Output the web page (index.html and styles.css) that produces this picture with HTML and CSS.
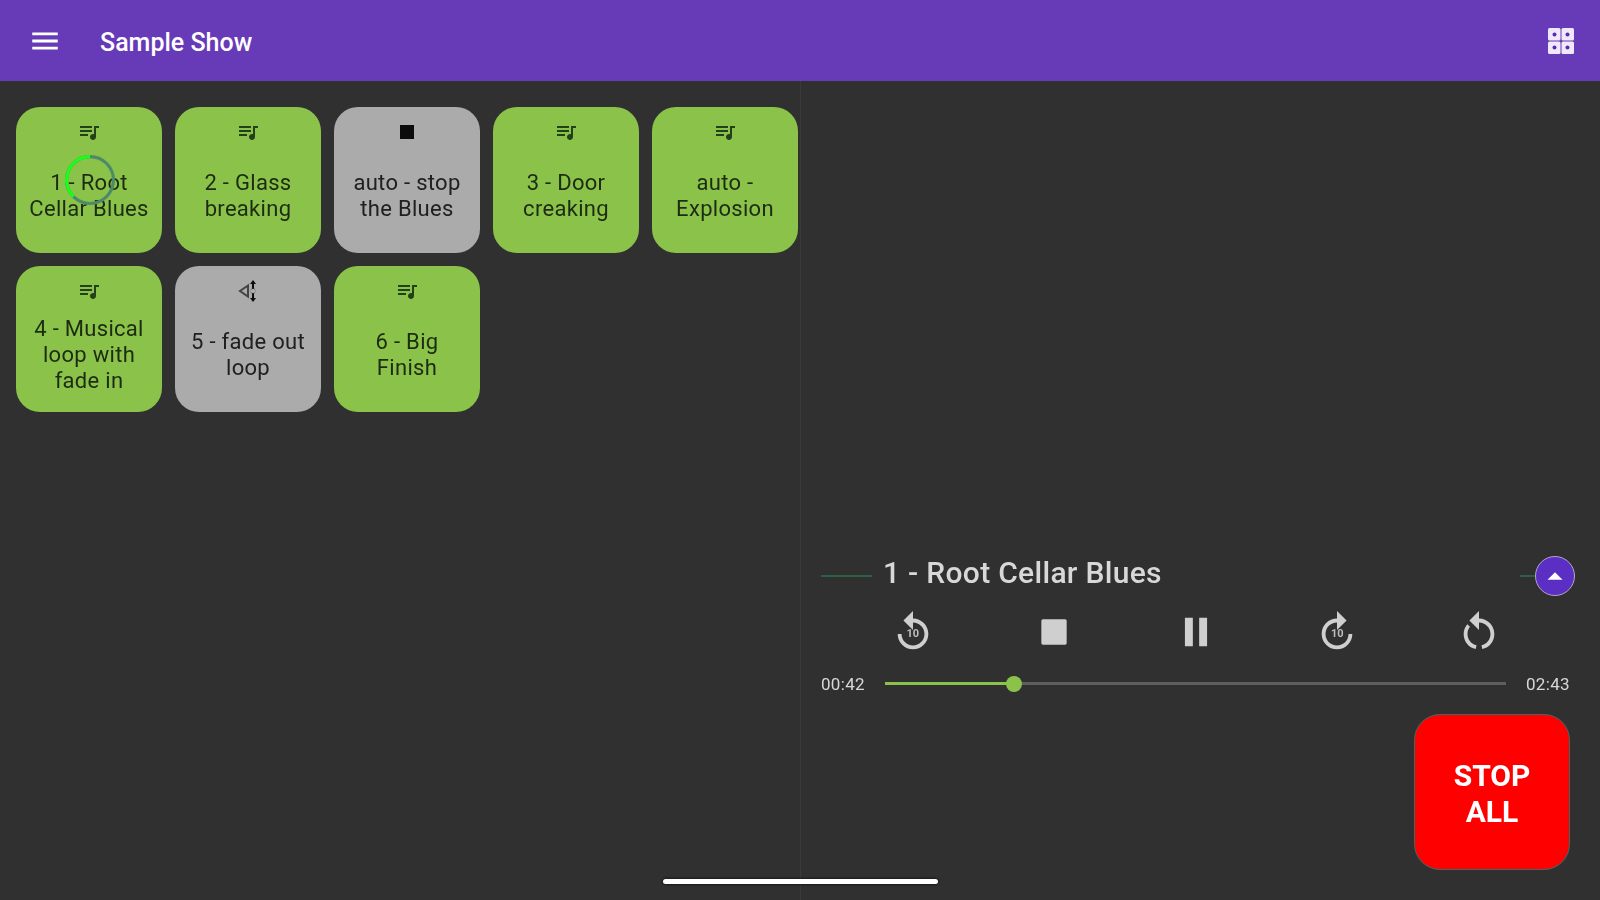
FILE: index.html
```html
<!DOCTYPE html>
<html>
    <head>
        <title>Sample Show</title>
        <link rel="stylesheet" href="styles.css">
    </head>
    <body>
        <svg class="defs" width="0" height="0">
            <symbol id="queue" viewBox="0 0 24 24"><path d="M15 6H3v2h12V6zm0 4H3v2h12v-2zM3 16h8v-2H3v2zM17 6v8.18c-.31-.11-.65-.18-1-.18-1.66 0-3 1.34-3 3s1.34 3 3 3 3-1.34 3-3V8h3V6h-5z"/></symbol>
        </svg>
        <div class="app">
            <header class="appbar">
                <svg class="menu-icon" viewBox="0 0 24 24"><path d="M3 18h18v-2H3v2zm0-5h18v-2H3v2zm0-7v2h18V6H3z"/></svg>
                <div class="show-title">Sample Show</div>
                <svg class="grid-icon" viewBox="0 0 26 26">
                    <rect x="0" y="0" width="12.500" height="12.500" rx="1.500"/><rect x="13.500" y="0" width="12.500" height="12.500" rx="1.500"/>
                    <rect x="0" y="13.500" width="12.500" height="12.500" rx="1.500"/><rect x="13.500" y="13.500" width="12.500" height="12.500" rx="1.500"/>
                    <circle class="dot" cx="6.500" cy="6.500" r="2"/><circle class="dot" cx="19.500" cy="6.500" r="2"/>
                    <circle class="dot" cx="6.500" cy="19.500" r="2"/><circle class="dot" cx="19.500" cy="19.500" r="2"/>
                </svg>
            </header>
            <main class="content">
                <section class="cue-pane">
                    <div class="cue-grid">
                        <div class="cue green">
                            <svg class="cue-icon"><use href="#queue"/></svg>
                            <div class="cue-label">1 - Root Cellar Blues</div>
                            <svg class="ring" viewBox="0 0 48 48">
                                <circle class="ring-rest" cx="24" cy="24" r="22.5"/>
                                <path class="ring-done" d="M24 1.5A22.5 22.5 0 0 0 8.1 39.9"/>
                            </svg>
                        </div>
                        <div class="cue green">
                            <svg class="cue-icon"><use href="#queue"/></svg>
                            <div class="cue-label">2 - Glass breaking</div>
                        </div>
                        <div class="cue gray">
                            <svg class="cue-icon" viewBox="0 0 24 24"><rect x="5" y="5" width="14" height="14"/></svg>
                            <div class="cue-label">auto - stop the Blues</div>
                        </div>
                        <div class="cue green">
                            <svg class="cue-icon"><use href="#queue"/></svg>
                            <div class="cue-label">3 - Door creaking</div>
                        </div>
                        <div class="cue green">
                            <svg class="cue-icon"><use href="#queue"/></svg>
                            <div class="cue-label">auto - Explosion</div>
                        </div>
                        <div class="cue green">
                            <svg class="cue-icon"><use href="#queue"/></svg>
                            <div class="cue-label">4 - Musical loop with fade in</div>
                        </div>
                        <div class="cue gray">
                            <svg class="cue-icon" viewBox="0 0 24 24">
                                <path class="fade-tri" d="M12 6.5 4 12l8 5.500z"/>
                                <path d="M17 1l3 4h-2v4.500a2.500 2.500 0 1 1-2 0V5h-2zM17 23l3-4h-2v-4.500a2.500 2.500 0 1 0-2 0V19h-2z"/>
                            </svg>
                            <div class="cue-label">5 - fade out loop</div>
                        </div>
                        <div class="cue green">
                            <svg class="cue-icon"><use href="#queue"/></svg>
                            <div class="cue-label">6 - Big Finish</div>
                        </div>
                    </div>
                </section>
                <section class="player-pane">
                    <div class="now-playing">
                        <div class="level"></div>
                        <div class="track-title">1 - Root Cellar Blues</div>
                        <div class="level-end"></div>
                        <div class="expand-btn"><svg viewBox="0 0 24 24"><path d="M6 15l6-6 6 6z"/></svg></div>
                    </div>
                    <div class="controls">
                        <div class="control">
                            <svg viewBox="0 0 24 24"><path d="M12 5V1L7 6l5 5V7c3.3 0 6 2.700 6 6s-2.700 6-6 6-6-2.700-6-6H4c0 4.400 3.600 8 8 8s8-3.600 8-8-3.600-8-8-8z"/></svg>
                            <span class="skip-num">10</span>
                        </div>
                        <div class="control control-small"><svg viewBox="0 0 24 24"><rect x="4" y="4" width="16" height="16" rx="1"/></svg></div>
                        <div class="control control-small"><svg viewBox="0 0 24 24"><path d="M5 3h5v18H5zM14 3h5v18h-5z"/></svg></div>
                        <div class="control">
                            <svg viewBox="0 0 24 24"><path d="M18 13c0 3.310-2.690 6-6 6s-6-2.690-6-6 2.690-6 6-6v4l5-5-5-5v4c-4.420 0-8 3.580-8 8s3.580 8 8 8 8-3.580 8-8h-2z"/></svg>
                            <span class="skip-num">10</span>
                        </div>
                        <div class="control">
                            <svg viewBox="0 0 24 24"><path d="M12 7c3.300 0 6 2.700 6 6 0 2.900-2 5.300-4.700 5.900l.4 2c3.700-.8 6.300-4 6.300-7.900 0-4.400-3.600-8-8-8V1L7 6l5 5zM10.700 18.900C8 18.300 6 15.900 6 13c0-1.400.5-2.700 1.300-3.700L5.900 7.900C4.700 9.300 4 11.100 4 13c0 3.900 2.600 7.100 6.300 7.900z"/></svg>
                        </div>
                    </div>
                    <div class="seek-row">
                        <span class="time time-start">00:42</span>
                        <div class="slider">
                            <div class="slider-fill" style="width: 20.8%"><span class="slider-thumb"></span></div>
                        </div>
                        <span class="time time-end">02:43</span>
                    </div>
                    <div class="stop-row">
                        <button class="stop-all">STOP ALL</button>
                    </div>
                </section>
            </main>
        </div>
        <div class="home-bar"></div>
    </body>
</html>
```

FILE: styles.css
```css
html, body {
    margin: 0;
    height: 100%;
    overflow: hidden;
    background-color: #303030;
    font-family: Roboto, "Liberation Sans", sans-serif;
}

.defs {
    position: absolute;
}

.app {
    display: flex;
    flex-direction: column;
    height: 900px;
    filter: blur(0.6px);
}

.appbar {
    display: flex;
    align-items: center;
    flex: none;
    height: 81px;
    padding: 0 26px 0 28px;
    box-sizing: border-box;
    background-color: #673ab7;
    color: white;
}

.menu-icon {
    width: 34px;
    height: 34px;
    fill: white;
}

.show-title {
    flex: 1;
    margin: 4px 0 0 38px;
    font-size: 25px;
    font-weight: 500;
}

.grid-icon {
    width: 26px;
    height: 26px;
    fill: #efe8fa;
}

.grid-icon .dot {
    fill: #5a2bb0;
}

.content {
    display: flex;
    flex: 1;
}

.cue-pane {
    width: 800px;
    flex: none;
    padding: 26px 0 0 16px;
    box-sizing: border-box;
}

.cue-grid {
    display: grid;
    grid-template-columns: repeat(5, 146px);
    grid-auto-rows: 146px;
    gap: 13px;
}

.cue {
    position: relative;
    display: flex;
    flex-direction: column;
    align-items: center;
    padding: 13px 12px 5px;
    box-sizing: border-box;
    border-radius: 24px;
    color: #1d2b12;
}

.green {
    background-color: #8bc34a;
}

.gray {
    background-color: #ababab;
    color: #202020;
}

.cue-icon {
    flex: none;
    width: 24px;
    height: 24px;
    fill: #24401a;
}

.gray .cue-icon {
    fill: #0c0c0c;
}

.gray .cue-icon .fade-tri {
    fill: none;
    stroke: #444;
    stroke-width: 2;
}

.cue-label {
    flex: 1;
    display: flex;
    align-items: center;
    text-align: center;
    font-size: 22px;
    letter-spacing: 0.3px;
    line-height: 26px;
}

.ring {
    position: absolute;
    left: 49px;
    top: 48px;
    width: 50px;
    height: 50px;
    fill: none;
    stroke-width: 3;
}

.ring-rest {
    stroke: #4d8a68;
}

.ring-done {
    stroke: #1aff1a;
}

.player-pane {
    flex: 1;
    display: flex;
    flex-direction: column;
    justify-content: flex-end;
    padding: 0 30px 30px 20px;
    border-left: 1px solid #3a3a3a;
}

.now-playing {
    display: flex;
    align-items: center;
    height: 44px;
    margin-right: -5px;
}

.level {
    width: 51px;
    height: 2px;
    margin-top: 8px;
    margin-right: 11px;
    background-color: #2f5f42;
}

.track-title {
    flex: 1;
    font-size: 30px;
    font-weight: 500;
    letter-spacing: 0.3px;
    color: #d8d8d8;
}

.level-end {
    width: 15px;
    height: 2px;
    margin-top: 8px;
    background-color: #2f5f42;
}

.expand-btn {
    display: flex;
    align-items: center;
    justify-content: center;
    width: 38px;
    height: 38px;
    margin-top: 8px;
    border: 1px solid #b0a8c8;
    border-radius: 50%;
    background-color: #5b2ec4;
}

.expand-btn svg {
    width: 30px;
    height: 30px;
    fill: white;
}

.controls {
    display: grid;
    grid-template-columns: repeat(5, 141.500px);
    margin: 16px 0 0 21px;
}

.control {
    position: relative;
    display: flex;
    justify-content: center;
    height: 44px;
    align-items: center;
}

.control svg {
    width: 46px;
    height: 46px;
    fill: #cfcfcf;
}

.control-small svg {
    width: 38px;
    height: 38px;
}

.skip-num {
    position: absolute;
    left: 0;
    right: 0;
    top: 17px;
    text-align: center;
    font-size: 11px;
    font-weight: 700;
    color: #bdbdbd;
}

.seek-row {
    display: flex;
    align-items: center;
    height: 26px;
    margin-top: 16px;
    margin-bottom: 2px;
}

.time {
    margin-top: 2px;
    font-size: 17px;
    letter-spacing: 0.3px;
    color: #d8d8d8;
}

.time-start {
    width: 64px;
}

.time-end {
    width: 44px;
    margin-left: 20px;
}

.slider {
    flex: 1;
    height: 3px;
    background-color: #5e5e5e;
}

.slider-fill {
    position: relative;
    height: 100%;
    background-color: #8bc34a;
}

.slider-thumb {
    position: absolute;
    right: -8px;
    top: -6px;
    width: 16px;
    height: 16px;
    border-radius: 50%;
    background-color: #8bc34a;
}

.stop-row {
    display: flex;
    justify-content: flex-end;
    margin-top: 16px;
}

.stop-all {
    width: 156px;
    height: 156px;
    padding: 4px 30px 0;
    border: 1px solid #3f6a66;
    border-radius: 26px;
    background-color: #ff0000;
    color: white;
    font-family: Roboto, "Liberation Sans", sans-serif;
    font-size: 30px;
    font-weight: 700;
    line-height: 36px;
}

.home-bar {
    position: absolute;
    left: 663px;
    top: 879px;
    width: 275px;
    height: 5px;
    border-radius: 3px;
    background-color: white;
    box-shadow: 0 0 3px #000;
}
```
